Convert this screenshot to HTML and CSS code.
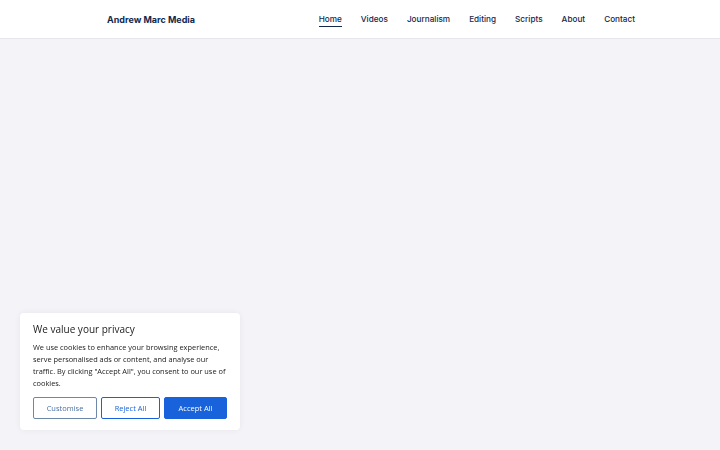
FILE: index.html
```html
<!DOCTYPE html>
<html lang="en">
<head>
  <meta charset="UTF-8">
  <meta name="viewport" content="width=device-width, initial-scale=1.0">
  <title>Andrew Marc Media</title>
  <link rel="stylesheet" href="styles.css">
</head>
<body>

  <!-- Header -->
  <header class="site-header">
    <div class="header-inner">
      <a class="logo" href="#">Andrew Marc Media</a>
      <nav>
        <ul class="nav-list">
          <li><a class="active" href="#">Home</a></li>
          <li><a href="#">Videos</a></li>
          <li><a href="#">Journalism</a></li>
          <li><a href="#">Editing</a></li>
          <li><a href="#">Scripts</a></li>
          <li><a href="#">About</a></li>
          <li><a href="#">Contact</a></li>
        </ul>
      </nav>
    </div>
  </header>

  <main class="page"></main>

  <!-- Cookie banner -->
  <div class="cookie-box">
    <h3>We value your privacy</h3>
    <p>We use cookies to enhance your browsing experience, serve personalised ads or content, and analyse our traffic. By clicking "Accept All", you consent to our use of cookies.</p>
    <div class="cookie-buttons">
      <button class="btn btn-outline btn-custom">Customise</button>
      <button class="btn btn-outline">Reject All</button>
      <button class="btn btn-fill">Accept All</button>
    </div>
  </div>

</body>
</html>
```

FILE: styles.css
```css
/* Reset */
* {
  margin: 0;
  padding: 0;
  box-sizing: border-box;
}

body {
  font-family: "Inter", "Open Sans", sans-serif;
  background-color: #f3f3f8;
  height: 450px;
  overflow: hidden;
}

/* Header */
.site-header {
  background-color: #fff;
  border-bottom: 1px solid #e6e6ec;
  height: 39px;
}

.header-inner {
  display: flex;
  justify-content: space-between;
  align-items: center;
  height: 38px;
  padding: 0 85px 0 107px;
}

.logo {
  color: #14284b;
  font-weight: 700;
  font-size: 9px;
  text-decoration: none;
}

.nav-list {
  list-style: none;
  display: flex;
  gap: 19px;
}

.nav-list a {
  display: block;
  color: #14284b;
  font-size: 8.2px;
  font-weight: 500;
  text-decoration: none;
  padding: 2px 0;
  border-bottom: 1px solid transparent;
}

.nav-list a.active {
  border-bottom-color: #14284b;
}

/* Cookie banner */
.cookie-box {
  position: fixed;
  left: 20px;
  bottom: 20px;
  width: 220px;
  padding: 9px 13px 11px;
  background-color: #fff;
  border-radius: 4px;
  box-shadow: 0 0 6px rgba(0, 0, 0, 0.06);
  font-family: "Open Sans", sans-serif;
}

.cookie-box h3 {
  color: #212121;
  font-size: 10px;
  font-weight: 500;
  margin-bottom: 5px;
}

.cookie-box p {
  color: #212121;
  font-size: 7.4px;
  line-height: 12px;
  margin-bottom: 8px;
}

.cookie-buttons {
  display: flex;
  gap: 4px;
}

.btn {
  height: 22px;
  font-family: inherit;
  font-size: 7.5px;
  border-radius: 2px;
  cursor: pointer;
}

.btn-outline {
  background-color: #fff;
  color: #1863dc;
  border: 1.5px solid #1863dc;
  width: 59px;
}

.btn-custom {
  width: 64px;
  border-color: #6b88a8;
  color: #4a6fa5;
}

.btn-fill {
  width: 63px;
  background-color: #1863dc;
  border: 1.5px solid #1863dc;
  color: #fff;
}
```
